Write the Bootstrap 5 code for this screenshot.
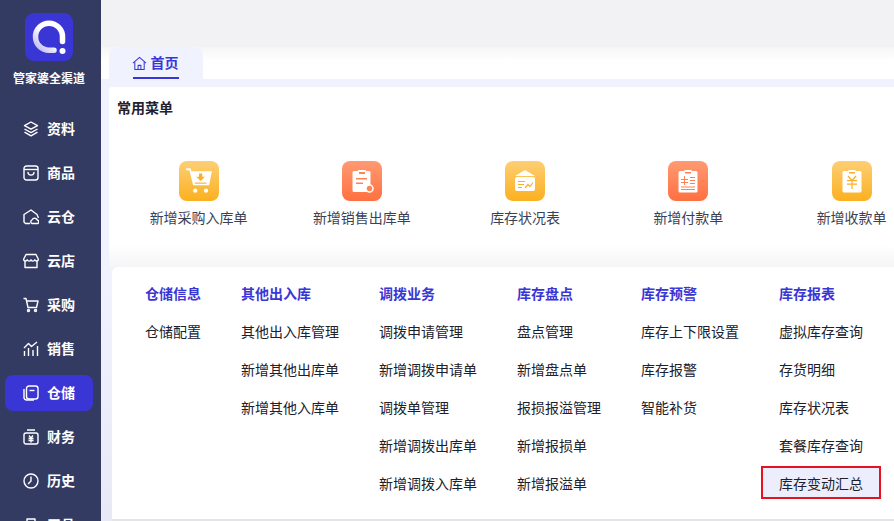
<!DOCTYPE html>
<html lang="zh-CN">
<head>
  <meta charset="UTF-8">
  <title>首页</title>
  <link href="https://cdn.jsdelivr.net/npm/bootstrap@5.3.0/dist/css/bootstrap.min.css" rel="stylesheet">
  <style>
    html, body { height: 521px; overflow: hidden; }
    body { font-family: "Liberation Sans", "Noto Sans CJK SC", sans-serif; font-size: 14px; background: #f0f2fe; color: #1f1f2e; }
    .side-bar { width: 101px; height: 521px; background: #343b62; color: #fff; flex: none; overflow: hidden; }
    .logo-box { width: 48px; height: 48px; margin: 13px 0 0 25px; background: #3a36d5; border-radius: 9px; }
    .logo-box svg { display: block; }
    .logo-name { width: 98px; font-size: 12px; font-weight: 700; margin-top: 10px; line-height: 17px; text-align: center; }
    .side-menu { margin-top: 23px; }
    .side-link { width: 88px; height: 36px; margin: 0 0 8px 5px; border-radius: 8px; color: #fff; font-weight: 700; text-decoration: none; gap: 8px; padding-left: 18px; }
    .side-link.active-item { background: #3a36d5; }
    .side-link svg { flex: none; fill: none; stroke: #fff; stroke-width: 1.4; stroke-linejoin: round; }
    .main-area { width: 793px; height: 521px; overflow: hidden; background: linear-gradient(180deg, #f0f2fe 55%, #e7e9f5); }
    .top-strip { height: 47px; background: #f2f2f5; }
    .tab-row { height: 32px; background: linear-gradient(180deg, #f6f6f8, #fff 45%); padding-left: 8px; }
    .home-tab { width: 94px; height: 32px; background: #f0f2fe; border-radius: 9px 9px 0 0; color: #3a36d5; font-weight: 700; gap: 4px; padding-right: 2px; position: relative; }
    .home-tab::after { content: ""; position: absolute; left: 24px; right: 24px; bottom: 0; height: 2px; background: #3a36d5; }
    .fav-panel { height: 180px; margin: 8px 0 0 8px; background: linear-gradient(180deg, #fff 88%, #f5f5f7); padding: 12px 0 0 8px; border-radius: 3px 0 0 0; }
    .panel-title { font-weight: 700; line-height: 18px; color: #22222f; }
    .fav-row { margin-top: 44px; width: 830px; }
    .fav-item { width: 163.25px; flex: none; color: #3c3f55; }
    .fav-icon { width: 40px; height: 40px; border-radius: 8px; margin-bottom: 8px; }
    .fav-icon.amber { background: linear-gradient(180deg, #fdcf74, #fbb020); }
    .fav-icon.coral { background: linear-gradient(180deg, #ff9a72, #ff7040); }
    .fav-label { line-height: 18px; white-space: nowrap; }
    .menu-panel { height: 252px; margin-left: 11px; background: #fff; border-radius: 6px 0 0 0; padding-top: 14px; }
    .menu-col { flex: none; }
    .menu-col.c1 { width: 114px; margin-left: 15px; }
    .menu-col.c1 .menu-head, .menu-col.c1 .menu-link { padding-left: 18px; }
    .menu-col.c2 { width: 138px; }
    .menu-col.c3 { width: 138px; }
    .menu-col.c4 { width: 124px; }
    .menu-col.c5 { width: 138px; }
    .menu-col.c6 { width: 116px; }
    .menu-head { color: #3a36d5; font-weight: 700; line-height: 26px; margin-bottom: 8px; white-space: nowrap; }
    .menu-link { display: block; height: 34px; line-height: 34px; margin-bottom: 4px; color: #20202c; text-decoration: none; white-space: nowrap; }
    .menu-link.picked { width: 120px; height: 33px; line-height: 32px; margin: -1px 0 0 -18px; padding-left: 16px; background: #eceefd; border: 2px solid #e8121e; }
    .foot-strip { height: 2px; background: #e4e4e8; margin-left: 11px; }
  </style>
</head>
<body>
  <div class="d-flex">
    <!-- Side menu -->
    <div class="side-bar">
      <div class="logo-box">
        <svg width="48" height="48" viewBox="0 0 48 48">
          <defs>
            <linearGradient id="ringFill" x1="0" y1="1" x2="1" y2="0">
              <stop offset="0" stop-color="#b9b6ef"/>
              <stop offset="0.5" stop-color="#fff"/>
            </linearGradient>
          </defs>
          <path d="M29 37.200H24A13.500 13.500 0 1 1 37.500 23.700V28.500" fill="none" stroke="url(#ringFill)" stroke-width="5.500" stroke-linecap="round"/>
          <circle cx="37.500" cy="38" r="3" fill="#fff"/>
        </svg>
      </div>
      <div class="logo-name">管家婆全渠道</div>
      <div class="side-menu">
        <a class="side-link d-flex align-items-center" href="#">
          <svg width="16" height="16" viewBox="0 0 16 16"><path d="M8 1L14.500 4.600 8 8.200 1.500 4.600Z"/><path d="M1.500 8L8 11.600 14.500 8"/><path d="M1.500 11.200L8 14.800 14.500 11.200"/></svg>资料</a>
        <a class="side-link d-flex align-items-center" href="#">
          <svg width="16" height="16" viewBox="0 0 16 16"><rect x="1" y="1" width="14" height="14" rx="2.500"/><path d="M1 4.500H15"/><path d="M5 7.500C5.500 11 10.500 11 11 7.500" stroke-linecap="round"/></svg>商品</a>
        <a class="side-link d-flex align-items-center" href="#">
          <svg width="16" height="16" viewBox="0 0 16 16"><path d="M7 14.500H2.500L1 13V5.500L8 1 14 5.500 15.500 9"/><path d="M9 14.500A2 2 0 0 1 9 10.800 3 3 0 0 1 14.500 11.200 1.700 1.700 0 0 1 14.500 14.500Z"/></svg>云仓</a>
        <a class="side-link d-flex align-items-center" href="#">
          <svg width="16" height="16" viewBox="0 0 16 16"><path d="M3 1.500H13L15.500 6.500C15 8.500 12.500 8.500 11.800 6.800 11 8.500 9 8.500 8 6.800 7 8.500 5 8.500 4.200 6.800 3.500 8.500 1 8.500 0.500 6.500Z"/><path d="M2 8V14.500H14V8"/></svg>云店</a>
        <a class="side-link d-flex align-items-center" href="#">
          <svg width="16" height="16" viewBox="0 0 16 16"><path d="M0.500 1.500H3L5 10.500H13.500L15 4H3.500"/><circle cx="5.500" cy="13.500" r="1"/><circle cx="12.500" cy="13.500" r="1"/></svg>采购</a>
        <a class="side-link d-flex align-items-center" href="#">
          <svg width="16" height="16" viewBox="0 0 16 16"><path d="M1 7L5.500 2.500 8.500 5.500 14 1"/><path d="M1.500 15V10M5.500 15V7M10 15V9M14.500 15V5"/></svg>销售</a>
        <a class="side-link active-item d-flex align-items-center" href="#">
          <svg width="16" height="16" viewBox="0 0 16 16"><rect x="3.500" y="1" width="11.500" height="13" rx="2.500"/><path d="M1 4V12.500A2.500 2.500 0 0 0 3.500 15H11"/><path d="M6.500 5.500H11.500"/></svg>仓储</a>
        <a class="side-link d-flex align-items-center" href="#">
          <svg width="16" height="16" viewBox="0 0 16 16"><rect x="1" y="4" width="14" height="11" rx="2"/><path d="M4 1H12M6 6.500L8 9 10 6.500M5.500 9.500H10.500M5.500 11.500H10.500M8 9V13.500"/></svg>财务</a>
        <a class="side-link d-flex align-items-center" href="#">
          <svg width="16" height="16" viewBox="0 0 16 16"><circle cx="8" cy="8" r="7"/><path d="M8 3.500V8L5 11"/></svg>历史</a>
        <a class="side-link d-flex align-items-center" href="#">
          <svg width="16" height="16" viewBox="0 0 16 16"><path d="M4 5V2H12V5"/><rect x="1" y="5" width="14" height="9" rx="2"/></svg>工具</a>
      </div>
    </div>

    <div class="main-area">
      <div class="top-strip"></div>
      <div class="tab-row">
        <div class="home-tab d-flex align-items-center justify-content-center">
          <svg width="15" height="15" viewBox="0 0 16 16" fill="none" stroke="#3a36d5" stroke-width="1.1" stroke-linejoin="round"><path d="M1 7.500L8 1.500 15 7.500"/><path d="M3 6V14.500H13V6"/><path d="M6.500 14.500V10H9.500V14.500"/></svg>
          首页
        </div>
      </div>

      <!-- Frequent items -->
      <div class="fav-panel">
        <div class="panel-title">常用菜单</div>
        <div class="fav-row d-flex">
          <div class="fav-item d-flex flex-column align-items-center">
            <div class="fav-icon amber d-flex align-items-center justify-content-center">
              <svg width="30" height="30" viewBox="0 0 28 28" fill="#fff"><path d="M2 2H6L7 5H26L23.500 18H8.500L5 4H2Z"/><circle cx="10.500" cy="23" r="2"/><circle cx="20.500" cy="23" r="2"/><path d="M14 7H17V10H19.500L15.500 14 11.500 10H14Z" fill="#f8b02c"/><path d="M10 15.500H21V16.500H10Z" fill="#f8b02c"/></svg>
            </div>
            <div class="fav-label">新增采购入库单</div>
          </div>
          <div class="fav-item d-flex flex-column align-items-center">
            <div class="fav-icon coral d-flex align-items-center justify-content-center">
              <svg width="28" height="28" viewBox="0 0 28 28" fill="#fff"><path d="M6 4H10V3H18V4H21A1.500 1.500 0 0 1 22.500 5.500V25H6A1.500 1.500 0 0 1 4.500 23.500V5.500A1.500 1.500 0 0 1 6 4Z"/><path d="M11 5H17V7H11ZM8 11H19V12.500H8ZM8 15.500H15V17H8Z" fill="#ff8355"/><circle cx="21.500" cy="21.500" r="3.500" fill="#ff8355" stroke="#fff" stroke-width="1.500"/></svg>
            </div>
            <div class="fav-label">新增销售出库单</div>
          </div>
          <div class="fav-item d-flex flex-column align-items-center">
            <div class="fav-icon amber d-flex align-items-center justify-content-center">
              <svg width="28" height="28" viewBox="0 0 28 28" fill="#fff"><path d="M4 9L14 3 24 9Z"/><rect x="4" y="10" width="20" height="14" rx="2"/><path d="M7 14H14V15H7ZM7 17H13V18H7ZM7 20H11V21H7Z" fill="#f8b02c"/><path d="M14 21L17 17.500 19 19.500 22 15.500" fill="none" stroke="#f8b02c" stroke-width="1.200"/></svg>
            </div>
            <div class="fav-label">库存状况表</div>
          </div>
          <div class="fav-item d-flex flex-column align-items-center">
            <div class="fav-icon coral d-flex align-items-center justify-content-center">
              <svg width="28" height="28" viewBox="0 0 28 28" fill="#fff"><path d="M6 4H10.500V3H17.500V4H22A1.500 1.500 0 0 1 23.500 5.500V24A1.500 1.500 0 0 1 22 25.500H6A1.500 1.500 0 0 1 4.500 24V5.500A1.500 1.500 0 0 1 6 4Z"/><path d="M11 5H17V6.500H11ZM16 10H21V11H16ZM16 13H21V14H16ZM16 16H21V17H16ZM7 19.500H21V20.500H7ZM7 22H21V23H7ZM7 12H14V13H7ZM7 15H14V16H7ZM10 9H11V18H10Z" fill="#ff8050"/></svg>
            </div>
            <div class="fav-label">新增付款单</div>
          </div>
          <div class="fav-item d-flex flex-column align-items-center">
            <div class="fav-icon amber d-flex align-items-center justify-content-center">
              <svg width="28" height="28" viewBox="0 0 28 28" fill="#fff"><path d="M6 4H10.500V3H17.500V4H22A1.500 1.500 0 0 1 23.500 5.500V24A1.500 1.500 0 0 1 22 25.500H6A1.500 1.500 0 0 1 4.500 24V5.500A1.500 1.500 0 0 1 6 4Z"/><path d="M11 5H17V6.500H11ZM9 13H19V14.200H9ZM9 16.500H19V17.700H9ZM13.400 13H14.600V22H13.400Z" fill="#f8b02c"/><path d="M10 9L14 13.500 18 9" fill="none" stroke="#f8b02c" stroke-width="1.300"/></svg>
            </div>
            <div class="fav-label">新增收款单</div>
          </div>
        </div>
      </div>

      <!-- Warehouse menu -->
      <div class="menu-panel d-flex">
        <div class="menu-col c1">
          <div class="menu-head">仓储信息</div>
          <a class="menu-link" href="#">仓储配置</a>
        </div>
        <div class="menu-col c2">
          <div class="menu-head">其他出入库</div>
          <a class="menu-link" href="#">其他出入库管理</a>
          <a class="menu-link" href="#">新增其他出库单</a>
          <a class="menu-link" href="#">新增其他入库单</a>
        </div>
        <div class="menu-col c3">
          <div class="menu-head">调拨业务</div>
          <a class="menu-link" href="#">调拨申请管理</a>
          <a class="menu-link" href="#">新增调拨申请单</a>
          <a class="menu-link" href="#">调拨单管理</a>
          <a class="menu-link" href="#">新增调拨出库单</a>
          <a class="menu-link" href="#">新增调拨入库单</a>
        </div>
        <div class="menu-col c4">
          <div class="menu-head">库存盘点</div>
          <a class="menu-link" href="#">盘点管理</a>
          <a class="menu-link" href="#">新增盘点单</a>
          <a class="menu-link" href="#">报损报溢管理</a>
          <a class="menu-link" href="#">新增报损单</a>
          <a class="menu-link" href="#">新增报溢单</a>
        </div>
        <div class="menu-col c5">
          <div class="menu-head">库存预警</div>
          <a class="menu-link" href="#">库存上下限设置</a>
          <a class="menu-link" href="#">库存报警</a>
          <a class="menu-link" href="#">智能补货</a>
        </div>
        <div class="menu-col c6">
          <div class="menu-head">库存报表</div>
          <a class="menu-link" href="#">虚拟库存查询</a>
          <a class="menu-link" href="#">存货明细</a>
          <a class="menu-link" href="#">库存状况表</a>
          <a class="menu-link" href="#">套餐库存查询</a>
          <a class="menu-link picked" href="#">库存变动汇总</a>
        </div>
      </div>
      <div class="foot-strip"></div>
    </div>
  </div>
  <script src="https://cdn.jsdelivr.net/npm/bootstrap@5.3.0/dist/js/bootstrap.bundle.min.js"></script>
</body>
</html>
